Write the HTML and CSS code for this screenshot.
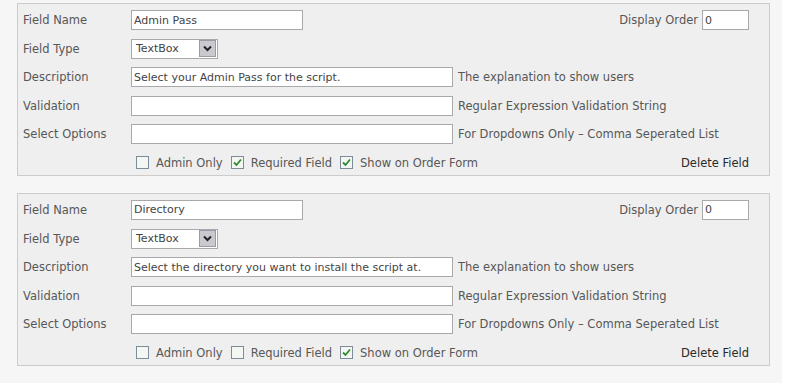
FILE: index.html
```html
<!DOCTYPE html>
<html lang="en">
<head>
    <title>Custom Fields</title>
    <link rel="stylesheet" href="styles.css">
</head>
<body>
    <div class="page">
        <div class="field-box">
            <div class="row">
                <span class="label">Field Name</span>
                <input class="text short" type="text" value="Admin Pass">
                <span class="order">Display Order <input class="text tiny" type="text" value="0"></span>
            </div>
            <div class="row">
                <span class="label">Field Type</span>
                <span class="select"><span class="select-value">TextBox</span><span class="select-btn"><svg width="9" height="7" viewBox="0 0 9 7"><path d="M1 1.5 L4.5 5 L8 1.5" fill="none" stroke="#222" stroke-width="2"/></svg></span></span>
            </div>
            <div class="row">
                <span class="label">Description</span>
                <input class="text long" type="text" value="Select your Admin Pass for the script.">
                <span class="help">The explanation to show users</span>
            </div>
            <div class="row">
                <span class="label">Validation</span>
                <input class="text long" type="text" value="">
                <span class="help">Regular Expression Validation String</span>
            </div>
            <div class="row">
                <span class="label">Select Options</span>
                <input class="text long" type="text" value="">
                <span class="help">For Dropdowns Only – Comma Seperated List</span>
            </div>
            <div class="row opts">
                <span class="check"><span class="box"></span>Admin Only</span>
                <span class="check"><span class="box"><svg width="11" height="11" viewBox="0 0 11 11"><path d="M2 5.5 L4.5 8 L9 2.5" fill="none" stroke="#2e8b2e" stroke-width="1.8"/></svg></span>Required Field</span>
                <span class="check"><span class="box"><svg width="11" height="11" viewBox="0 0 11 11"><path d="M2 5.5 L4.5 8 L9 2.5" fill="none" stroke="#2e8b2e" stroke-width="1.8"/></svg></span>Show on Order Form</span>
                <a class="delete" href="#">Delete Field</a>
            </div>
        </div>

        <div class="field-box">
            <div class="row">
                <span class="label">Field Name</span>
                <input class="text short" type="text" value="Directory">
                <span class="order">Display Order <input class="text tiny" type="text" value="0"></span>
            </div>
            <div class="row">
                <span class="label">Field Type</span>
                <span class="select"><span class="select-value">TextBox</span><span class="select-btn"><svg width="9" height="7" viewBox="0 0 9 7"><path d="M1 1.5 L4.5 5 L8 1.5" fill="none" stroke="#222" stroke-width="2"/></svg></span></span>
            </div>
            <div class="row">
                <span class="label">Description</span>
                <input class="text long" type="text" value="Select the directory you want to install the script at.">
                <span class="help">The explanation to show users</span>
            </div>
            <div class="row">
                <span class="label">Validation</span>
                <input class="text long" type="text" value="">
                <span class="help">Regular Expression Validation String</span>
            </div>
            <div class="row">
                <span class="label">Select Options</span>
                <input class="text long" type="text" value="">
                <span class="help">For Dropdowns Only – Comma Seperated List</span>
            </div>
            <div class="row opts">
                <span class="check"><span class="box"></span>Admin Only</span>
                <span class="check"><span class="box"></span>Required Field</span>
                <span class="check"><span class="box"><svg width="11" height="11" viewBox="0 0 11 11"><path d="M2 5.5 L4.5 8 L9 2.5" fill="none" stroke="#2e8b2e" stroke-width="1.8"/></svg></span>Show on Order Form</span>
                <a class="delete" href="#">Delete Field</a>
            </div>
        </div>
    </div>
</body>
</html>
```

FILE: styles.css
```css
body {
    margin: 0;
    background: #fff;
    font-family: "DejaVu Sans", Verdana, sans-serif;
    font-size: 11.5px;
    color: #575757;
}
.page {
    width: 770px;
    background: #f6f6f6;
    padding: 3px 0 0 12px;
    height: 380px;
}
.field-box {
    width: 753px;
    margin-left: 5px;
    margin-bottom: 17px;
    background: #efefef;
    border: 1px solid #cccccc;
    padding: 6px 20px 2px 5px;
    box-sizing: border-box;
}
.row {
    display: flex;
    align-items: center;
    height: 20px;
    margin-bottom: 8.6px;
}
.row.opts {
    margin-bottom: 0;
    padding-left: 113px;
}
.label {
    width: 108px;
    flex: none;
}
.text {
    font-family: inherit;
    font-size: 11px;
    color: #444;
    height: 20px;
    box-sizing: border-box;
    border: 1px solid #a9a9a9;
    background: #fff;
    padding: 0 2px;
    margin: 0;
    outline: none;
}
.short {
    width: 172px;
}
.long {
    width: 322px;
}
.tiny {
    width: 47px;
    margin-left: 4px;
}
.help {
    margin-left: 5px;
}
.order {
    margin-left: auto;
    display: flex;
    align-items: center;
}
.select {
    display: flex;
    align-items: center;
    width: 87px;
    height: 20px;
    box-sizing: border-box;
    border: 1px solid #a9a9a9;
    background: #fff;
    color: #444;
    font-size: 11px;
}
.select-value {
    flex: 1;
    padding-left: 4px;
}
.select-btn {
    width: 17px;
    height: 17px;
    margin-right: 1px;
    background: #c9c9cf;
    border: 1px solid #9a9aa6;
    box-sizing: border-box;
    display: flex;
    align-items: center;
    justify-content: center;
}
.check {
    display: flex;
    align-items: center;
    margin-right: 8px;
}
.box {
    width: 13px;
    height: 13px;
    box-sizing: border-box;
    border: 1px solid #7d8c99;
    background: #f4f6f4;
    margin-right: 7px;
    display: flex;
    align-items: center;
    justify-content: center;
}
.delete {
    margin-left: auto;
    color: #2a2a2a;
    text-decoration: none;
}
```
